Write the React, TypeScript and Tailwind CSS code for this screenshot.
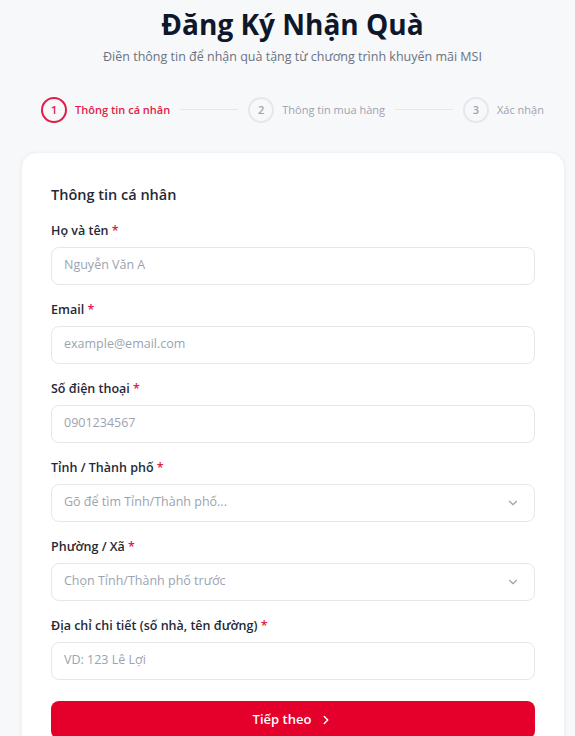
import { ChevronDown, ChevronRight } from "lucide-react";

const font = { fontFamily: '"Open Sans", "Noto Sans", sans-serif' };

function Step({ n, label, active }: { n: number; label: string; active?: boolean }) {
  return (
    <div className="flex items-center gap-2">
      <div
        className={
          active
            ? "w-[26px] h-[26px] rounded-full border-2 border-[#e11d48] text-[#e11d48] flex items-center justify-center text-[11px] font-semibold"
            : "w-[26px] h-[26px] rounded-full border-2 border-[#e5e7eb] text-[#9ca3af] flex items-center justify-center text-[11px] font-semibold"
        }
      >
        {n}
      </div>
      <span
        className={
          active
            ? "text-[11px] font-semibold text-[#e11d48]"
            : "text-[11px] text-[#9ca3af]"
        }
      >
        {label}
      </span>
    </div>
  );
}

function Field({
  label,
  placeholder,
  select,
}: {
  label: string;
  placeholder: string;
  select?: boolean;
}) {
  return (
    <div className="flex flex-col">
      <label className="text-[12.5px] leading-5 font-semibold text-[#1f2937] mb-1.5">
        {label} <span className="text-[#e11d48]">*</span>
      </label>
      <div className="h-[38px] rounded-lg border border-[#e5e7eb] bg-white flex items-center justify-between pl-3 pr-[14px]">
        <span className="text-[12.5px] text-[#9ca3af]">{placeholder}</span>
        {select && <ChevronDown className="w-3.5 h-3.5 text-[#9ca3af]" strokeWidth={2} />}
      </div>
    </div>
  );
}

export default function App() {
  return (
    <div className="min-h-screen bg-[#f7f8fa] pt-[5px] pl-[10px]" style={font}>
      <div className="flex flex-col items-center">
        <h1 className="text-[28px] leading-[38px] font-bold text-[#0f172a]">Đăng Ký Nhận Quà</h1>
        <p className="mt-[5px] text-[12.5px] text-[#6b7280]">
          Điền thông tin để nhận quà tặng từ chương trình khuyến mãi MSI
        </p>
      </div>

      <div className="flex items-center justify-center mt-[30px]">
        <Step n={1} label="Thông tin cá nhân" active />
        <div className="w-[58px] h-px bg-[#e5e7eb] mx-[10px]" />
        <Step n={2} label="Thông tin mua hàng" />
        <div className="w-[58px] h-px bg-[#e5e7eb] mx-[10px]" />
        <Step n={3} label="Xác nhận" />
      </div>

      <div className="ml-[11px] mr-[10px] mt-[29px] bg-white rounded-2xl shadow-[0_1px_4px_rgba(0,0,0,0.06)] border border-[#f1f2f4] px-[29px] pt-[31px] pb-8">
        <h2 className="text-[14.5px] leading-[22px] font-semibold text-[#1f2937] mb-[15px]">
          Thông tin cá nhân
        </h2>
        <div className="flex flex-col gap-[15px]">
          <Field label="Họ và tên" placeholder="Nguyễn Văn A" />
          <Field label="Email" placeholder="example@email.com" />
          <Field label="Số điện thoại" placeholder="0901234567" />
          <Field label="Tỉnh / Thành phố" placeholder="Gõ để tìm Tỉnh/Thành phố..." select />
          <Field label="Phường / Xã" placeholder="Chọn Tỉnh/Thành phố trước" select />
          <Field label="Địa chỉ chi tiết (số nhà, tên đường)" placeholder="VD: 123 Lê Lợi" />
        </div>
        <button className="mt-[21px] w-full h-[38px] rounded-lg bg-[#e4002b] text-white text-[13px] font-semibold flex items-center justify-center gap-2">
          Tiếp theo
          <ChevronRight className="w-3.5 h-3.5" strokeWidth={2.5} />
        </button>
      </div>
    </div>
  );
}
